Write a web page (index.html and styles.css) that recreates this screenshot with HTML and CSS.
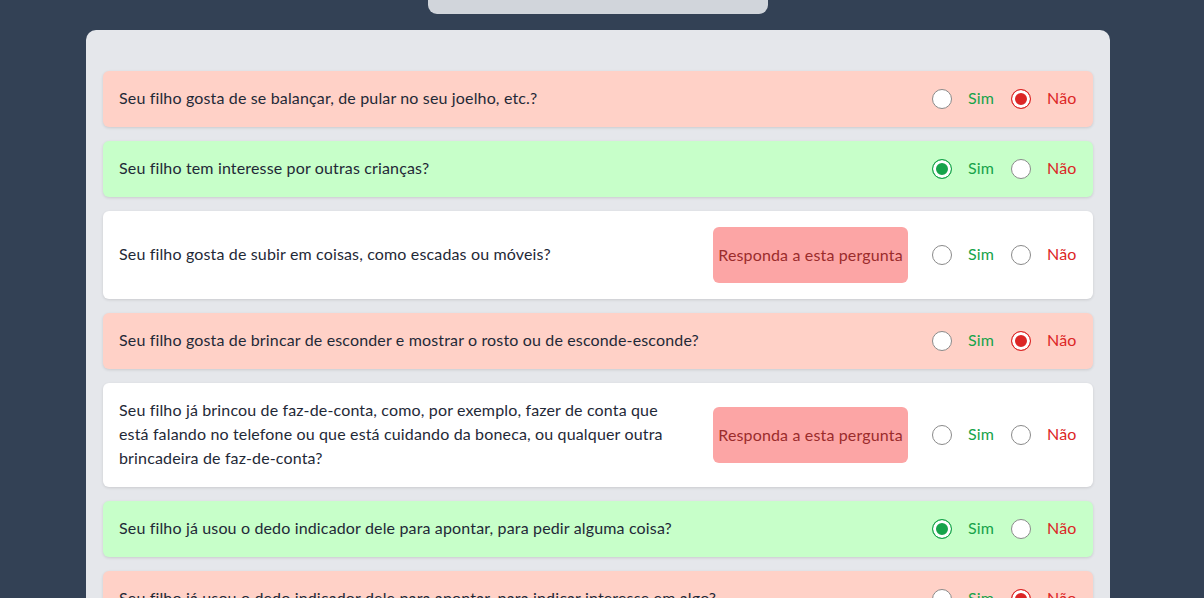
FILE: index.html
```html
<!DOCTYPE html>
<html lang="pt">
<head>
<meta charset="utf-8">
<link rel="stylesheet" href="styles.css">
<title>Questionário</title>
</head>
<body>
<div class="page">
  <div class="tab"></div>
  <main class="card">
    <div class="row row-no">
      <p class="q">Seu filho gosta de se balançar, de pular no seu joelho, etc.?</p>
      <div class="opts"><span class="radio"></span><span class="sim">Sim</span><span class="radio checked-no"></span><span class="nao">Não</span></div>
    </div>
    <div class="row row-yes">
      <p class="q">Seu filho tem interesse por outras crianças?</p>
      <div class="opts"><span class="radio checked-yes"></span><span class="sim">Sim</span><span class="radio"></span><span class="nao">Não</span></div>
    </div>
    <div class="row">
      <p class="q">Seu filho gosta de subir em coisas, como escadas ou móveis?</p>
      <div class="warn">Responda a esta pergunta</div>
      <div class="opts"><span class="radio"></span><span class="sim">Sim</span><span class="radio"></span><span class="nao">Não</span></div>
    </div>
    <div class="row row-no">
      <p class="q">Seu filho gosta de brincar de esconder e mostrar o rosto ou de esconde-esconde?</p>
      <div class="opts"><span class="radio"></span><span class="sim">Sim</span><span class="radio checked-no"></span><span class="nao">Não</span></div>
    </div>
    <div class="row">
      <p class="q">Seu filho já brincou de faz-de-conta, como, por exemplo, fazer de conta que<br>está falando no telefone ou que está cuidando da boneca, ou qualquer outra<br>brincadeira de faz-de-conta?</p>
      <div class="warn">Responda a esta pergunta</div>
      <div class="opts"><span class="radio"></span><span class="sim">Sim</span><span class="radio"></span><span class="nao">Não</span></div>
    </div>
    <div class="row row-yes">
      <p class="q">Seu filho já usou o dedo indicador dele para apontar, para pedir alguma coisa?</p>
      <div class="opts"><span class="radio checked-yes"></span><span class="sim">Sim</span><span class="radio"></span><span class="nao">Não</span></div>
    </div>
    <div class="row row-no">
      <p class="q">Seu filho já usou o dedo indicador dele para apontar, para indicar interesse em algo?</p>
      <div class="opts"><span class="radio"></span><span class="sim">Sim</span><span class="radio checked-no"></span><span class="nao">Não</span></div>
    </div>
  </main>
</div>
</body>
</html>
```

FILE: styles.css
```css
html, body {
  margin: 0;
  padding: 0;
  background: #334155;
  height: 598px;
  overflow: hidden;
}
body {
  font-family: Lato, "Noto Sans", sans-serif;
  font-size: 16px;
  letter-spacing: 0.15px;
  color: #1f2937;
}
.page {
  width: 1196px;
  display: flex;
  flex-direction: column;
  align-items: center;
}
.tab {
  width: 340px;
  height: 14px;
  background: #d1d5db;
  border-radius: 0 0 9px 9px;
}
.card {
  margin-top: 16px;
  width: 1024px;
  box-sizing: border-box;
  background: #e5e7eb;
  border-radius: 10px;
  padding: 41px 17px 40px;
  display: flex;
  flex-direction: column;
  gap: 14px;
}
.row {
  display: flex;
  align-items: center;
  gap: 24px;
  background: #ffffff;
  border-radius: 6px;
  padding: 16px 16px;
  box-shadow: 0 1px 3px rgba(0, 0, 0, 0.12);
}
.row-no { background: #ffd1c7; }
.row-yes { background: #c7ffc9; }
.q {
  margin: -1px 0 1px;
  flex: 1;
  line-height: 24px;
}
.warn {
  background: #fca5a5;
  color: #9b2c2c;
  border-radius: 6px;
  width: 195px;
  box-sizing: border-box;
  height: 56px;
  padding-bottom: 1px;
  display: flex;
  align-items: center;
  justify-content: center;
  white-space: nowrap;
}
.opts {
  display: flex;
  align-items: center;
  gap: 16px;
  line-height: 24px;
}
.opts span:not(.radio) {
  margin-top: -1px;
  margin-bottom: 1px;
}
.radio {
  width: 20px;
  height: 20px;
  box-sizing: border-box;
  border: 1px solid #8a8a8a;
  border-radius: 50%;
  background: #ffffff;
}
.checked-yes {
  border-color: #16a34a;
  background: #16a34a;
  box-shadow: inset 0 0 0 3px #ffffff;
}
.checked-no {
  border-color: #dc2626;
  background: #dc2626;
  box-shadow: inset 0 0 0 3px #ffffff;
}
.sim { color: #16a34a; width: 27px; }
.nao { color: #dc2626; width: 30px; }
```
